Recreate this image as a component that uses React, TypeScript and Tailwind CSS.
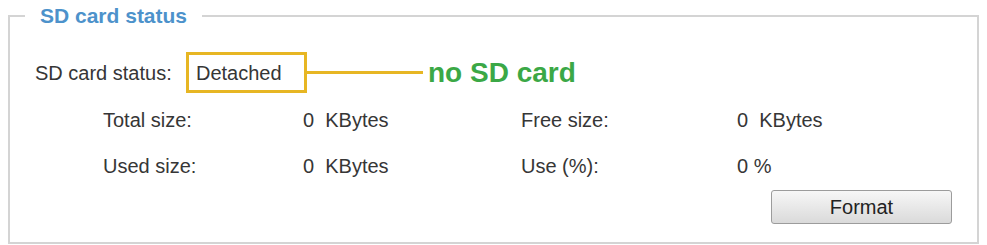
const rows = [
  { label: 'Total size:', value: '0  KBytes', label2: 'Free size:', value2: '0  KBytes' },
  { label: 'Used size:', value: '0  KBytes', label2: 'Use (%):', value2: '0 %' },
];

export default function App() {
  return (
    <div className="w-[987px] h-[245px] bg-white pt-[4px] px-[8px] font-['Liberation_Sans',Arial,sans-serif] text-[#363636]">
      <fieldset className="h-[240px] border-2 border-[#d4d4d4] flex flex-col">
        <legend className="ml-[15px] px-[15px] h-[24px] leading-[24px] text-[21px] font-bold text-[#4d92cb]">
          SD card status
        </legend>

        {/* Status row with annotation */}
        <div className="mt-[24px] pl-[25px] flex items-center h-[41px] text-[20px]">
          <span className="w-[151px]">SD card status:</span>
          <span className="w-[121px] h-[41px] border-[3px] border-[#e7b623] pl-[7px] flex items-center">
            Detached
          </span>
          <span className="w-[116px] h-[3px] bg-[#e7b623]" />
          <span className="ml-[5px] text-[28px] font-bold text-[#3ba846]">no SD card</span>
        </div>

        {/* Size rows */}
        <div className="mt-[12px] flex flex-col gap-[16px] text-[20px]">
          {rows.map((r) => (
            <div key={r.label} className="pl-[93px] grid grid-cols-[200px_218px_216px_1fr] h-[30px] items-center">
              <span>{r.label}</span>
              <span className="whitespace-pre">{r.value}</span>
              <span>{r.label2}</span>
              <span className="whitespace-pre">{r.value2}</span>
            </div>
          ))}
        </div>

        <div className="mt-[9px] pr-[25px] flex justify-end">
          <button className="w-[181px] h-[34px] rounded-[3px] border border-[#9c9c9c] bg-gradient-to-b from-[#f7f7f7] to-[#dadada] text-[20px] text-[#222]">
            Format
          </button>
        </div>
      </fieldset>
    </div>
  );
}
